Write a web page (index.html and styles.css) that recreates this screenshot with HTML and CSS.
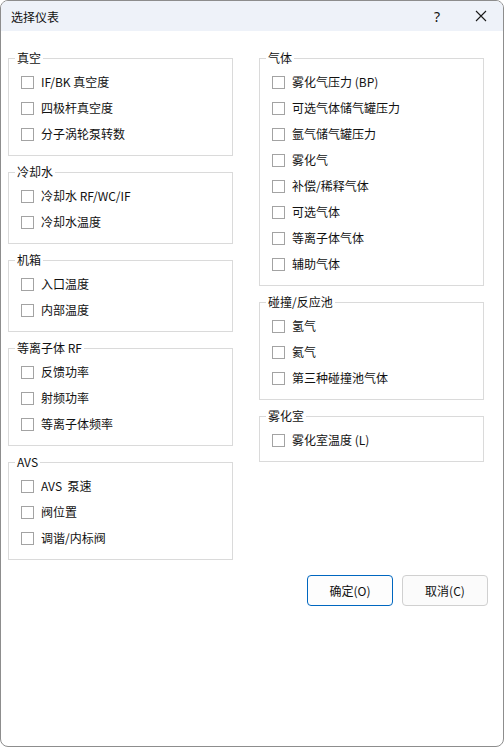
FILE: index.html
```html
<!DOCTYPE html>
<html lang="zh">
<head>
<meta charset="utf-8">
<title>选择仪表</title>
<link rel="stylesheet" href="styles.css">
</head>
<body>
<div class="window">
  <div class="titlebar">
    <span class="title">选择仪表</span>
    <span class="help">?</span>
    <span class="close">
      <svg width="12" height="12" viewBox="0 0 12 12"><path d="M1 1 L11 11 M11 1 L1 11" stroke="#1a1a1a" stroke-width="1.1" fill="none"/></svg>
    </span>
  </div>
  <div class="content">
    <div class="columns">
      <div class="col">
        <fieldset class="group">
          <legend>真空</legend>
          <label class="row"><span class="box"></span>IF/BK 真空度</label>
          <label class="row"><span class="box"></span>四极杆真空度</label>
          <label class="row"><span class="box"></span>分子涡轮泵转数</label>
        </fieldset>
        <fieldset class="group">
          <legend>冷却水</legend>
          <label class="row"><span class="box"></span>冷却水 RF/WC/IF</label>
          <label class="row"><span class="box"></span>冷却水温度</label>
        </fieldset>
        <fieldset class="group">
          <legend>机箱</legend>
          <label class="row"><span class="box"></span>入口温度</label>
          <label class="row"><span class="box"></span>内部温度</label>
        </fieldset>
        <fieldset class="group">
          <legend>等离子体 RF</legend>
          <label class="row"><span class="box"></span>反馈功率</label>
          <label class="row"><span class="box"></span>射频功率</label>
          <label class="row"><span class="box"></span>等离子体频率</label>
        </fieldset>
        <fieldset class="group">
          <legend>AVS</legend>
          <label class="row"><span class="box"></span>AVS&nbsp; 泵速</label>
          <label class="row"><span class="box"></span>阀位置</label>
          <label class="row"><span class="box"></span>调谐/内标阀</label>
        </fieldset>
      </div>
      <div class="col">
        <fieldset class="group">
          <legend>气体</legend>
          <label class="row"><span class="box"></span>雾化气压力 (BP)</label>
          <label class="row"><span class="box"></span>可选气体储气罐压力</label>
          <label class="row"><span class="box"></span>氩气储气罐压力</label>
          <label class="row"><span class="box"></span>雾化气</label>
          <label class="row"><span class="box"></span>补偿/稀释气体</label>
          <label class="row"><span class="box"></span>可选气体</label>
          <label class="row"><span class="box"></span>等离子体气体</label>
          <label class="row"><span class="box"></span>辅助气体</label>
        </fieldset>
        <fieldset class="group">
          <legend>碰撞/反应池</legend>
          <label class="row"><span class="box"></span>氢气</label>
          <label class="row"><span class="box"></span>氦气</label>
          <label class="row"><span class="box"></span>第三种碰撞池气体</label>
        </fieldset>
        <fieldset class="group">
          <legend>雾化室</legend>
          <label class="row"><span class="box"></span>雾化室温度 (L)</label>
        </fieldset>
      </div>
    </div>
    <div class="buttons">
      <button class="btn primary">确定(O)</button>
      <button class="btn">取消(C)</button>
    </div>
  </div>
</div>
</body>
</html>
```
FILE: styles.css
```css
html, body {
  margin: 0;
  padding: 0;
  background: #ffffff;
}
body {
  font-family: "Noto Sans CJK SC", "Noto Sans", sans-serif;
  font-size: 12px;
  color: #111111;
}
.window {
  width: 504px;
  height: 747px;
  box-sizing: border-box;
  border: 1px solid #8d8d8d;
  border-radius: 8px;
  overflow: hidden;
  background: #ffffff;
}
.titlebar {
  height: 30px;
  background: #eef2f9;
  display: flex;
  align-items: center;
  padding-left: 10px;
}
.title {
  font-size: 12px;
  flex: 1;
}
.help {
  width: 14px;
  text-align: center;
  font-family: "Noto Sans", sans-serif;
  font-size: 14px;
  margin-right: 31px;
}
.close {
  width: 12px;
  height: 12px;
  display: flex;
  margin-right: 16px;
}
.content {
  padding: 19px 15px 0 7px;
}
.columns {
  display: grid;
  grid-template-columns: 225px 225px;
  column-gap: 26px;
  align-items: start;
}
.col {
  display: flex;
  flex-direction: column;
  gap: 8px;
}
.group {
  margin: 0;
  padding: 3px 0 8px 0;
  border: 1px solid #dadada;
  min-width: 0;
}
.group legend {
  margin-left: 6px;
  padding: 0 2px;
  line-height: 16px;
  height: 16px;
}
.row {
  display: flex;
  align-items: center;
  height: 26px;
  padding-left: 12px;
  line-height: 16px;
}
.box {
  width: 13px;
  height: 13px;
  box-sizing: border-box;
  border: 1px solid #a3a3a3;
  background: #ffffff;
  margin-right: 7px;
  flex: none;
}
.buttons {
  display: flex;
  justify-content: flex-end;
  gap: 9px;
  margin-top: 15px;
}
.btn {
  width: 86px;
  height: 31px;
  box-sizing: border-box;
  border: 1px solid #d0d0d0;
  border-radius: 4px;
  background: #fbfbfb;
  font-family: "Noto Sans CJK SC", "Noto Sans", sans-serif;
  font-size: 12px;
  color: #111111;
  padding: 0;
}
.btn.primary {
  border-color: #0067c0;
  background: #fdfdfd;
}
```
